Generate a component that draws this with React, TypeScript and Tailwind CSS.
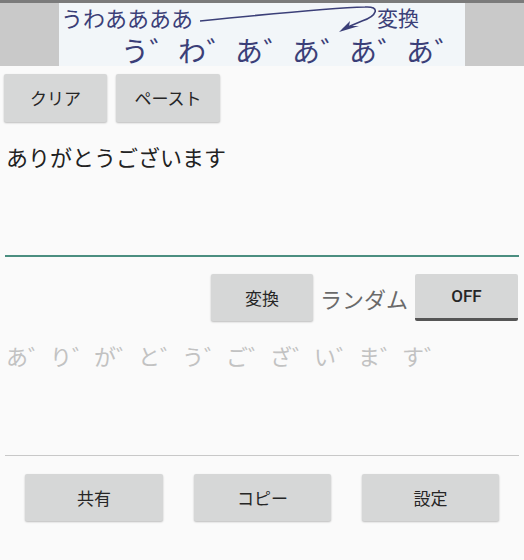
import React from 'react';

const jp = { fontFamily: '"Noto Sans CJK JP", "Noto Sans", sans-serif' };

function Btn({ label, className = '' }: { label: string; className?: string }) {
  return (
    <button
      className={`flex items-center justify-center rounded-[2px] bg-[#d6d7d7] text-[17px] text-[#262626] shadow-[0_1px_2px_rgba(0,0,0,0.25)] ${className}`}
    >
      {label}
    </button>
  );
}

function Banner() {
  return (
    <div className="flex h-[63px]">
      <div className="w-[59px] bg-[#c9c9c9]" />
      <div className="relative flex-1 overflow-hidden bg-[#f2f6f9] text-[#3b3f78]">
        <div className="flex h-[30px] items-start pl-[2px] text-[22px] leading-[28px]">
          <span>うわああああ</span>
          <span className="ml-[184px] text-[21px]">変換</span>
        </div>
        <div className="pl-[62px] text-[28px] leading-[34px] tracking-[0.5px]">う゛わ゛あ゛あ゛あ゛あ゛</div>
        <svg className="absolute inset-0" width="406" height="63" viewBox="0 0 406 63" fill="none">
          <path
            d="M141 18 C 200 12, 270 5, 306 4 C 322 3, 318 13, 303 18 L 284 26"
            stroke="#3b3f78"
            strokeWidth="1.6"
          />
          <path d="M280 29 L 291 18 L 290 23 L 300 23 Z" fill="#3b3f78" />
        </svg>
      </div>
      <div className="w-[59px] bg-[#c9c9c9]" />
    </div>
  );
}

export default function App() {
  return (
    <div className="h-[560px] w-[524px] overflow-hidden bg-[#fafafa]" style={jp}>
      <div className="h-[3px] bg-[#7b7b7b]" />
      <Banner />

      <div className="mt-[8px] flex gap-[9px] px-[4px]">
        <Btn label="クリア" className="h-[48px] w-[103px]" />
        <Btn label="ペースト" className="h-[48px] w-[104px]" />
      </div>

      <div className="mx-[5px] h-[135px] border-b-2 border-[#4b8e80] pl-[1px] pt-[19px] text-[22px] leading-[30px] text-[#222]">
        ありがとうございます
      </div>

      <div className="mt-[17px] flex items-center justify-end gap-[7px] pr-[6px]">
        <Btn label="変換" className="h-[47px] w-[102px]" />
        <span className="text-[22px] leading-[30px] text-[#6a6a6a]">ランダム</span>
        <button
          className="flex h-[47px] w-[103px] items-center justify-center rounded-[2px] border-b-[3px] border-[#555] bg-[#d6d7d7] pt-[2px] text-[17px] text-[#262626]"
          style={{ fontFamily: 'Roboto, "Noto Sans", sans-serif', fontWeight: 500 }}
        >
          OFF
        </button>
      </div>

      <div className="mx-[5px] h-[135px] border-b border-[#c8c8c8] pl-[1px] pt-[19px] text-[22px] leading-[30px] text-[#c2c2c2]">
        あ゛り゛が゛と゛う゛ご゛ざ゛い゛ま゛す゛
      </div>

      <div className="mt-[18px] flex justify-between px-[25px]">
        <Btn label="共有" className="h-[47px] w-[138px]" />
        <Btn label="コピー" className="h-[47px] w-[137px]" />
        <Btn label="設定" className="h-[47px] w-[137px]" />
      </div>
    </div>
  );
}
